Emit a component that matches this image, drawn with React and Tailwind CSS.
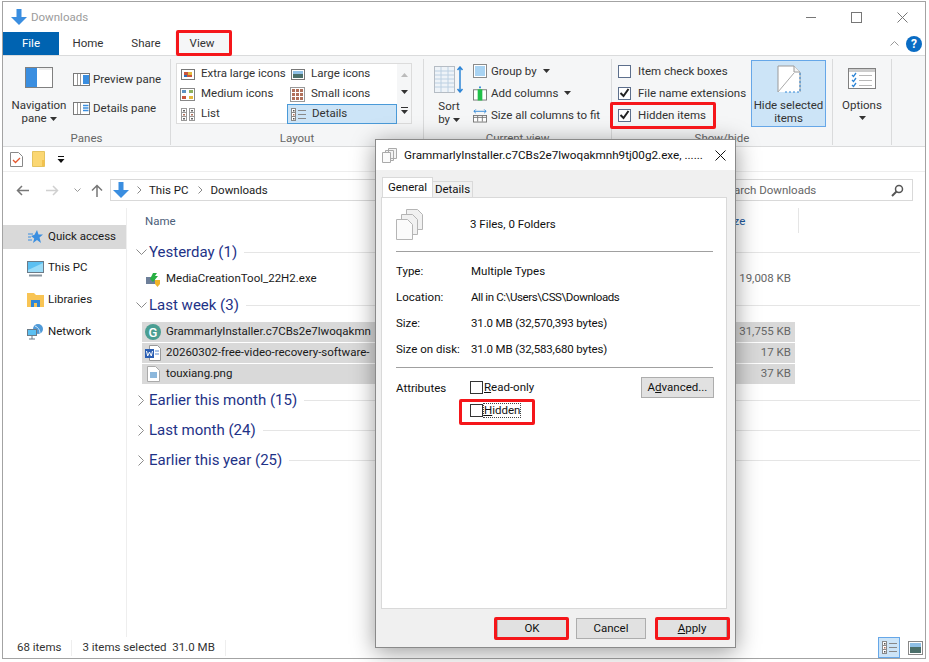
import React from "react";

const Caret = ({ className = "" }) => (
  <svg width="7" height="4" viewBox="0 0 7 4" className={`inline-block ${className}`}><path d="M0 0h7L3.5 4z" fill="#333" /></svg>
);

const DownArrow = ({ s = 16 }) => (
  <svg width={s} height={s} viewBox="0 0 16 16"><path d="M5.5 0h5v8H16l-8 8-8-8h5.500z" fill="#3a8ee0" /></svg>
);

const Check = ({ on }) => (
  <span className="flex h-[13px] w-[13px] shrink-0 items-center justify-center border border-[#5d6f8c] bg-white">
    {on && <svg width="11" height="10" viewBox="0 0 11 10"><path d="M1.500 5l3 3 5-7" fill="none" stroke="#222" strokeWidth="2" /></svg>}
  </span>
);

const GalleryIcon = ({ kind }) => {
  if (kind === "xl") return <svg width="14" height="11" viewBox="0 0 14 11"><rect x=".5" y=".5" width="13" height="10" fill="#fff" stroke="#777" /><rect x="3" y="3" width="8" height="5" fill="#c9553d" /><rect x="7" y="3" width="4" height="3" fill="#e5b93c" /><rect x="3" y="6" width="3" height="2" fill="#2f6fb5" /></svg>;
  if (kind === "l") return <svg width="14" height="11" viewBox="0 0 14 11"><rect x=".5" y=".5" width="13" height="10" fill="#fff" stroke="#777" /><rect x="2" y="2" width="10" height="3" fill="#8fc0e6" /><rect x="2" y="5" width="10" height="4" fill="#4b6f6a" /></svg>;
  if (kind === "m") return <svg width="15" height="13" viewBox="0 0 15 13"><rect x=".5" y=".5" width="14" height="12" fill="#fff" stroke="#888" /><rect x="2" y="2" width="4" height="3" fill="#5d93c4" /><rect x="9" y="2" width="4" height="3" fill="#8cb05a" /><rect x="2" y="8" width="4" height="3" fill="#c9553d" /><rect x="9" y="8" width="4" height="3" fill="#e5b93c" /></svg>;
  if (kind === "s") return <svg width="15" height="15" viewBox="0 0 15 15"><rect x=".5" y=".5" width="14" height="14" fill="#fff" stroke="#999" />{[2, 6, 10].flatMap((x) => [2, 6, 10].map((y) => <rect key={`${x}${y}`} x={x} y={y} width="3" height="3" fill={(x + y) % 4 ? "#8a9a5b" : "#b0705a"} />))}</svg>;
  if (kind === "list") return <svg width="14" height="13" viewBox="0 0 14 13" fill="none" stroke="#999">{[0, 8].map((x) => <g key={x}><rect x={x + .5} y=".5" width="5" height="12" fill="#fff" /><path d={`M${x} 4.500h6M${x} 8.500h6`} /><rect x={x + 2} y="2" width="2" height="1.500" fill="#666" stroke="none" /><rect x={x + 2} y="6" width="2" height="1.500" fill="#b0705a" stroke="none" /><rect x={x + 2} y="10" width="2" height="1.500" fill="#666" stroke="none" /></g>)}</svg>;
  return <DetailsGlyph />;
};

const DetailsGlyph = () => (
  <svg width="15" height="13" viewBox="0 0 15 13" fill="none" stroke="#888"><rect x=".5" y=".5" width="4" height="12" fill="#fff" /><path d="M0 4.500h5M0 8.500h5" /><rect x="2" y="2" width="1.500" height="1.500" fill="#555" stroke="none" /><rect x="2" y="6" width="1.500" height="1.500" fill="#b0705a" stroke="none" /><rect x="2" y="10" width="1.500" height="1.500" fill="#555" stroke="none" /><path d="M7 2.500h8M7 6.500h8M7 10.500h8" /></svg>
);

const PaneIcon = ({ right }) => (
  <svg width="17" height="13" viewBox="0 0 17 13">
    <rect x=".5" y=".5" width="16" height="12" fill="#fff" stroke="#7a7a7a" />
    <path d="M4.500 1v11M7.500 1v11" stroke="#9a9a9a" />
    <rect x="10" y="2" width="6" height="9" fill={right ? "#3a8ee0" : "#fff"} />
    {!right && <path d="M10 3.500h5.500M10 6h5.500M10 8.500h5.500" stroke="#3a8ee0" strokeWidth="1.300" />}
  </svg>
);

const GalleryCell = ({ icon, label, active }) => (
  <div className={`flex h-5 items-center gap-[6px] pl-[3px] ${active ? "border border-[#4a9ad8] bg-[#cce4f7]" : ""}`}>
    <span className="flex w-[15px] justify-center"><GalleryIcon kind={icon} /></span>
    <span className="whitespace-nowrap">{label}</span>
  </div>
);

const GroupLabel = ({ children }) => (
  <div className="flex h-[12px] items-center justify-center text-[#666]">{children}</div>
);

const RibbonGroup = ({ w, label, children }) => (
  <div className={`flex ${w} shrink-0 flex-col border-r border-[#dadbdc]`}>
    <div className="min-h-0 flex-1">{children}</div>
    <GroupLabel>{label}</GroupLabel>
  </div>
);

const CurrentRow = ({ icon, label, caret }) => (
  <div className="flex h-[22px] items-center gap-1">
    <span className="flex w-[14px] justify-center">{icon}</span>
    <span className="whitespace-nowrap pt-px">{label}</span>
    {caret && <Caret className="ml-[2px]" />}
  </div>
);

const ShowRow = ({ on, label }) => (
  <div className="flex h-[22px] items-center gap-[7px] whitespace-nowrap"><Check on={on} /><span className="pt-px">{label}</span></div>
);

const GroupHead = ({ open, label }) => (
  <div className="flex h-[30px] items-center">
    <span className="flex w-[15px] justify-center">
      {open
        ? <svg width="11" height="7" viewBox="0 0 11 7"><path d="M.5.500l5 5 5-5" fill="none" stroke="#8a8a8a" /></svg>
        : <svg width="7" height="11" viewBox="0 0 7 11"><path d="M.5.500l5 5-5 5" fill="none" stroke="#8a8a8a" /></svg>}
    </span>
    <span className="whitespace-nowrap text-[15px] text-[#1e3287]">{label}</span>
    <span className="ml-[7px] h-px flex-1 bg-[#e5e5e5]" />
  </div>
);

const FileRow = ({ icon, name, size, selected }) => (
  <div className={`flex h-5 items-center ${selected ? "bg-[#d9d9d9]" : ""} w-[653px]`}>
    <span className="flex w-[22px] justify-center">{icon}</span>
    <span className="ml-[2px] whitespace-nowrap text-[#1a1a1a]">{name}</span>
    <span className="ml-auto mr-[4px] text-[#666]">{size}</span>
  </div>
);

const NavRow = ({ icon, label, active }) => (
  <div className={`flex h-6 items-center ${active ? "bg-[#d9d9d9]" : ""}`}>
    <span className="ml-[22px] flex w-[21px] justify-center">{icon}</span>
    <span className="ml-[2px] whitespace-nowrap text-[#1a1a1a]">{label}</span>
  </div>
);

const Monitor = ({ s = 17 }) => (
  <svg width={s} height={s} viewBox="0 0 17 17"><rect x=".5" y="1.500" width="16" height="11" fill="#5cc0f2" stroke="#6b7b88" /><path d="M1 10l15-7v9H1z" fill="#9adcf8" /><rect x="2" y="14.500" width="13" height="2" fill="#8a96a0" /></svg>
);

const Red = ({ className }) => (
  <div className={`pointer-events-none absolute rounded-[2px] border-[3px] border-[#f5161a] ${className}`} />
);

const Prop = ({ k, v, tight = "" }) => (
  <div className="flex h-[26px] items-center">
    <span className="w-[75px] whitespace-nowrap">{k}</span>
    <span className={`whitespace-nowrap ${tight}`}>{v}</span>
  </div>
);

const DlgButton = ({ w, className = "", children }) => (
  <button className={`flex h-[21px] ${w} items-center justify-center border border-[#adadad] bg-[#e1e1e1] pt-px text-[#111] ${className}`}>{children}</button>
);

const Pages = ({ w = 27, h = 32 }) => (
  <svg width={w} height={h} viewBox="0 0 27 32">
    {[10, 5, 0].map((o) => (
      <path key={o} d={`M${o + .5} ${10.500 - o}h11l5 5v15h-16z`} fill={o === 0 ? "#fbfbfb" : "#f1f1f1"} stroke="#b5b5b5" />
    ))}
  </svg>
);

export default function App() {
  return (
    <div className="relative h-[662px] w-[929px] overflow-hidden bg-white pb-[3px] pl-[2px] pr-[3px] pt-px font-['Roboto',sans-serif] text-[11.500px] leading-none text-[#333]">
      <div className="flex h-full flex-col border border-[#a3a3a3] bg-white">
        {/* Title bar */}
        <div className="flex h-[30px] shrink-0 items-center pl-[8px]">
          <DownArrow s={16} />
          <span className="ml-[4px] pt-px text-[#9b9b9b]">Downloads</span>
          <div className="ml-auto flex items-center gap-[35px] pr-[17px]">
            <span className="h-px w-[10px] bg-[#777]" />
            <span className="h-[11px] w-[11px] border border-[#777]" />
            <svg width="11" height="11" viewBox="0 0 11 11"><path d="M.5.500l10 10M10.500.500l-10 10" stroke="#777" fill="none" /></svg>
          </div>
        </div>
        {/* Tabs */}
        <div className="relative flex h-[24px] shrink-0 items-stretch border-b border-[#dadbdc]">
          <div className="flex w-[56px] items-center justify-center bg-[#0063b1] pt-px text-white">File</div>
          <div className="flex w-[58px] items-center justify-center pt-px">Home</div>
          <div className="flex w-[58px] items-center justify-center pt-px">Share</div>
          <div className="flex w-[54px] items-center justify-center bg-[#f5f6f7] pt-px">View</div>
          <div className="ml-auto flex items-center gap-[7px] pr-[3px]">
            <svg width="9" height="5" viewBox="0 0 9 5"><path d="M.5 4.500l4-4 4 4" fill="none" stroke="#999" /></svg>
            <span className="flex h-4 w-4 items-center justify-center rounded-full bg-[#0a6cc4] text-[12px] font-bold text-white">?</span>
          </div>
        </div>
        {/* Ribbon */}
        <div className="flex h-[91px] shrink-0 border-b border-[#dadbdc] bg-[#f5f6f7] pb-[1px] pt-[3px]">
          <RibbonGroup w="w-[168px]" label="Panes">
            <div className="flex h-full">
              <div className="flex w-[70px] flex-col items-center pl-[2px]">
                <svg className="mt-[8px]" width="28" height="21" viewBox="0 0 28 21"><rect x=".5" y=".5" width="27" height="20" fill="#fff" stroke="#808080" /><rect x="1" y="1" width="11" height="19" fill="#3a8ee0" /><path d="M14 2h13" stroke="#ddd" /></svg>
                <div className="mt-[11px] leading-[13px]">Navigation</div>
                <div className="leading-[13px]">pane <Caret /></div>
              </div>
              <div className="flex flex-col pt-[6px]">
                <div className="flex h-[29px] items-center gap-[3px] whitespace-nowrap"><PaneIcon right />Preview pane</div>
                <div className="flex h-[29px] items-center gap-[3px] whitespace-nowrap"><PaneIcon />Details pane</div>
              </div>
            </div>
          </RibbonGroup>
          <RibbonGroup w="w-[253px]" label="Layout">
            <div className="ml-[5px] mt-[4px] flex h-[61px] w-[236px] border border-[#dcdcdc] bg-white">
              <div className="grid flex-1 grid-cols-[110px_110px] grid-rows-[20px_20px_20px]">
                <GalleryCell icon="xl" label="Extra large icons" />
                <GalleryCell icon="l" label="Large icons" />
                <GalleryCell icon="m" label="Medium icons" />
                <GalleryCell icon="s" label="Small icons" />
                <GalleryCell icon="list" label="List" />
                <GalleryCell icon="details" label="Details" active />
              </div>
              <div className="flex w-[14px] flex-col items-center justify-around bg-[#f5f6f7] py-[2px]">
                <svg width="7" height="4" viewBox="0 0 7 4"><path d="M0 4h7L3.500 0z" fill="#bbb" /></svg>
                <Caret />
                <svg width="7" height="7" viewBox="0 0 7 7"><path d="M0 0h7v1H0zM0 3h7L3.500 7z" fill="#333" /></svg>
              </div>
            </div>
          </RibbonGroup>
          <RibbonGroup w="w-[188px]" label="Current view">
            <div className="flex h-full">
              <div className="flex w-[49px] flex-col items-center pl-[1px]">
                <svg className="mt-[7px]" width="30" height="27" viewBox="0 0 30 27"><rect x=".5" y=".5" width="20" height="26" fill="#eef3f8" stroke="#b5bcc4" /><path d="M1 5h19M1 9h19M1 13h19M1 17h19M1 21h19M7 1v25M14 1v25" stroke="#bcd0e2" /><path d="M26 1v25M23.500 4L26 1l2.500 3M23.500 23L26 26l2.500-3" fill="none" stroke="#2f86d6" strokeWidth="1.500" /></svg>
                <div className="mt-[7px] leading-[13px]">Sort</div>
                <div className="leading-[13px]">by <Caret /></div>
              </div>
              <div className="pt-[1px]">
                <CurrentRow label="Group by" caret icon={<svg width="14" height="14" viewBox="0 0 14 14"><rect x=".5" y=".5" width="13" height="13" fill="#fff" stroke="#8a8a8a" /><rect x="2" y="2" width="10" height="10" fill="#a9d3f2" /></svg>} />
                <CurrentRow label="Add columns" caret icon={<svg width="15" height="15" viewBox="0 0 15 15"><rect x=".5" y="3.500" width="14" height="11" fill="#fff" stroke="#777" /><rect x="5" y="3" width="5" height="12" fill="#22c04a" /><path d="M7.500 0v2" stroke="#2f86d6" strokeWidth="2" /></svg>} />
                <CurrentRow label="Size all columns to fit" icon={<svg width="15" height="15" viewBox="0 0 15 15"><path d="M1 3h13M3 1L1 3l2 2M12 1l2 2-2 2" fill="none" stroke="#2f86d6" /><rect x=".5" y="7.500" width="14" height="7" fill="#fff" stroke="#777" /><path d="M0.500 9.500h14M5 8v6M10 8v6" stroke="#777" /></svg>} />
              </div>
            </div>
          </RibbonGroup>
          <RibbonGroup w="w-[221px]" label="Show/hide">
            <div className="flex h-full">
              <div className="w-[139px] pl-[6px] pt-[1px]">
                <ShowRow label="Item check boxes" />
                <ShowRow on label="File name extensions" />
                <ShowRow on label="Hidden items" />
              </div>
              <div className="mt-px flex h-[67px] w-[75px] shrink-0 flex-col items-center border border-[#66a7e8] bg-[#cce4f7] pt-[4px]">
                <svg width="24" height="28" viewBox="0 0 24 28"><path d="M1 27V1h16l6 6v20" fill="#fff" stroke="#9a9a9a" /><path d="M1 27L17 8" stroke="#aaa" /><path d="M23 8v19H8" fill="none" stroke="#2f86d6" strokeDasharray="2 2" /><path d="M17 1v6h6" fill="#f5f5f5" stroke="#9a9a9a" /></svg>
                <div className="mt-[6px] leading-[13px] whitespace-nowrap">Hide selected</div>
                <div className="leading-[13px]">items</div>
              </div>
            </div>
          </RibbonGroup>
          <RibbonGroup w="w-[59px]" label="">
            <div className="flex flex-col items-center">
              <svg className="mt-[9px]" width="28" height="21" viewBox="0 0 28 21"><rect x=".5" y=".5" width="27" height="20" fill="#fff" stroke="#808080" /><path d="M1 2.500h26" stroke="#ccc" strokeWidth="3" /><path d="M4 7l1.500 1.500L8 5M4 12l1.500 1.500L8 10M4 17l1.500 1.500L8 15" fill="none" stroke="#2f86d6" strokeWidth="1.300" /><path d="M11 7.500h13M11 12.500h13M11 17.500h13" stroke="#b8b8b8" /></svg>
              <div className="mt-[10px] leading-[13px]">Options</div>
              <Caret className="mt-[4px]" />
            </div>
          </RibbonGroup>
        </div>
        {/* Quick access toolbar */}
        <div className="flex h-[25px] shrink-0 items-center border-b border-[#eeeeee] pl-[7px]">
          <svg width="13" height="15" viewBox="0 0 13 15"><path d="M.5.500h8l4 4v10H.5z" fill="#fff" stroke="#888" /><path d="M3 8l2.500 2.500L10 6" fill="none" stroke="#e4572e" strokeWidth="1.300" /></svg>
          <svg className="ml-[9px]" width="13" height="16" viewBox="0 0 13 16"><path d="M.5.500h12v15H.5z" fill="#fbd772" stroke="#e4c35f" /><path d="M10 9v6h2.500V9z" fill="#f2c14e" /></svg>
          <svg className="ml-[12px]" width="8" height="7" viewBox="0 0 8 7"><path d="M1 0h6v1H1zM.5 3h7L4 7z" fill="#111" /></svg>
        </div>
        {/* Address row */}
        <div className="flex h-9 shrink-0 items-center pl-[13px] pr-[12px]">
          <svg width="13" height="11" viewBox="0 0 13 11"><path d="M13 5.500H2M6 1L1.500 5.500 6 10" fill="none" stroke="#777" strokeWidth="1.500" /></svg>
          <svg className="ml-[17px]" width="13" height="11" viewBox="0 0 13 11"><path d="M0 5.500h11M7 1l4.500 4.500L7 10" fill="none" stroke="#d0d0d0" strokeWidth="1.500" /></svg>
          <svg className="ml-[15px]" width="7" height="4" viewBox="0 0 7 4"><path d="M.5.500l3 3 3-3" fill="none" stroke="#999" /></svg>
          <svg className="ml-[10px]" width="12" height="13" viewBox="0 0 12 13"><path d="M6 13V2M1 6.500L6 1.500l5 5" fill="none" stroke="#777" strokeWidth="1.500" /></svg>
          <div className="ml-[7px] flex h-[22px] flex-1 items-center border border-[#d9d9d9] pl-[2px]">
            <DownArrow s={16} />
            <svg className="ml-[8px]" width="5" height="8" viewBox="0 0 5 8"><path d="M.5.500l3.500 3.500L.5 7.500" fill="none" stroke="#888" /></svg>
            <span className="ml-[7px] pt-px text-[#1a1a1a]">This PC</span>
            <svg className="ml-[9px]" width="5" height="8" viewBox="0 0 5 8"><path d="M.5.500l3.500 3.500L.5 7.500" fill="none" stroke="#888" /></svg>
            <span className="ml-[8px] pt-px text-[#1a1a1a]">Downloads</span>
          </div>
          <div className="ml-[5px] flex h-[22px] w-[197px] items-center justify-between border border-[#d9d9d9] pl-[4px] pr-[8px] text-[#666]">
            <span className="pt-px">Search Downloads</span>
            <svg width="13" height="13" viewBox="0 0 13 13"><circle cx="8" cy="5" r="3.500" fill="none" stroke="#555" strokeWidth="1.500" /><path d="M5.500 7.500L1 12" stroke="#555" strokeWidth="2" /></svg>
          </div>
        </div>
        {/* Main area */}
        <div className="flex min-h-0 flex-1">
          <div className="w-[124px] shrink-0 border-r border-[#eeeeee] pt-[17px]">
            <NavRow active label="Quick access" icon={<svg width="15" height="14" viewBox="0 0 15 14"><path d="M9 0l1.500 4.500H15l-3.500 3 1.500 5.500-4-3-4 3 1.200-4.500L3 6l3.500-1.200z" fill="#3a8ee0" /><path d="M0 4h5M0 7h3M0 10h4" stroke="#3a8ee0" /></svg>} />
            <div className="mt-[7px] flex flex-col gap-[8px]">
              <NavRow label="This PC" icon={<Monitor />} />
              <NavRow label="Libraries" icon={<svg width="17" height="14" viewBox="0 0 17 14"><path d="M0 0h7l2 2h8v12H0z" fill="#f8c454" /><rect x="4" y="7" width="9" height="7" fill="#2f86d6" /><rect x="7" y="10" width="3" height="4" fill="#f8c454" /></svg>} />
              <NavRow label="Network" icon={<svg width="17" height="16" viewBox="0 0 17 16"><circle cx="11" cy="5" r="5" fill="#4f9ad8" /><path d="M8 2c3 1 5 4 5 7" stroke="#cfe6f7" fill="none" /><rect x=".5" y="5.500" width="9" height="6" fill="#5cc0f2" stroke="#6b7b88" /><path d="M5 12v3M2 15h6" stroke="#6b7b88" /></svg>} />
            </div>
          </div>
          <div className="min-w-0 flex-1 pl-[7px] pr-[5px]">
            <div className="relative mb-[3px] flex h-[26px] items-center pl-[11px] pt-px text-[#4c607a]">
              <span>Name</span>
              <span className="absolute left-[590px] text-[#1e5a9e]">Size</span>
              <span className="absolute left-[664px] top-0 h-[25px] w-px bg-[#e5e5e5]" />
            </div>
            <GroupHead open label="Yesterday (1)" />
            <div className="mb-[1px] mt-[2px] pl-[8px]"><FileRow name="MediaCreationTool_22H2.exe" size="19,008 KB" icon={<svg width="16" height="16" viewBox="0 0 16 16"><rect x="1" y="6" width="9" height="7" fill="#6d7f99" /><path d="M5 8l3-6h4l-2 3h3l-5 6z" fill="#27b043" /><path d="M10 9h5v4l-2.500 3L10 13z" fill="#f0b429" /></svg>} /></div>
            <GroupHead open label="Last week (3)" />
            <div className="flex flex-col gap-px pl-[8px] pt-[2px]">
              <FileRow selected name="GrammarlyInstaller.c7CBs2e7lwoqakmn" size="31,755 KB" icon={<span className="flex h-4 w-4 items-center justify-center rounded-full bg-[#4a9e92] text-[13px] font-medium text-white">G</span>} />
              <FileRow selected name="20260302-free-video-recovery-software-" size="17 KB" icon={<svg width="16" height="16" viewBox="0 0 16 16"><path d="M4.500.500h8l3 3v12h-11z" fill="#fff" stroke="#999" /><rect x="0" y="4" width="9" height="9" fill="#2b5fb4" /><path d="M1.500 6l1.200 5 1.800-4 1.800 4L7.500 6" fill="none" stroke="#fff" /><path d="M10 6h4M10 9h4" stroke="#5a8bd0" /></svg>} />
              <FileRow selected name="touxiang.png" size="37 KB" icon={<svg width="13" height="16" viewBox="0 0 13 16"><path d="M.5.500h8l4 4v11H.5z" fill="#fff" stroke="#aaa" /><rect x="3" y="6" width="7" height="6" fill="#8db8dc" /></svg>} />
            </div>
            <div className="mt-[1px] flex flex-col">
              <GroupHead label="Earlier this month (15)" />
              <GroupHead label="Last month (24)" />
              <GroupHead label="Earlier this year (25)" />
            </div>
          </div>
        </div>
        {/* Status bar */}
        <div className="flex h-[21px] shrink-0 items-center pl-[14px] text-[#333]">
          <span className="pt-px">68 items</span>
          <span className="ml-[10px] h-4 w-px bg-[#eeeeee]" />
          <span className="ml-[10px] pt-px">3 items selected&nbsp; 31.0 MB</span>
          <span className="ml-[10px] h-4 w-px bg-[#eeeeee]" />
          <div className="ml-auto flex items-center gap-[8px] pr-[2px]">
            <span className="flex h-[21px] w-[22px] items-center justify-center border border-[#66a7e8] bg-[#cce4f7]"><DetailsGlyph /></span>
            <svg width="15" height="14" viewBox="0 0 15 14"><rect x=".5" y=".5" width="14" height="13" fill="#fff" stroke="#888" /><rect x="2" y="2" width="11" height="4" fill="#8fc0e6" /><rect x="2" y="6" width="11" height="6" fill="#4b6f6a" /></svg>
          </div>
        </div>
      </div>

      {/* Properties dialog */}
      <div className="absolute left-[375px] top-[139px] flex h-[509px] w-[361px] flex-col border border-[#8a8a8a] bg-[#f0f0f0] shadow-[0_4px_22px_rgba(0,0,0,0.4)]">
        <div className="flex h-[30px] shrink-0 items-center bg-white pl-[6px] pr-[9px] text-[11.700px] text-[#111]">
          <span className="mr-[7px] flex"><svg width="15" height="15" viewBox="0 0 15 15"><path d="M6.500.500h8v10h-8zM3.500 2.500h8v10h-8z" fill="#f4f4f4" stroke="#aaa" /><path d="M.5 4.500h8v10h-8z" fill="#fbfbfb" stroke="#aaa" /></svg></span>
          <span className="whitespace-nowrap pt-px">GrammarlyInstaller.c7CBs2e7lwoqakmnh9tj00g2.exe, ......</span>
          <svg className="ml-auto" width="11" height="11" viewBox="0 0 11 11"><path d="M.5.500l10 10M10.500.500l-10 10" stroke="#111" fill="none" /></svg>
        </div>
        <div className="flex min-h-0 flex-1 flex-col pl-[5px] pr-[8px]">
          <div className="relative z-10 mt-[7px] flex h-[20px] shrink-0 items-end pl-px text-[#111]">
            <div className="flex h-[20px] w-[51px] items-center justify-center border border-b-0 border-[#d9d9d9] bg-white">General</div>
            <div className="flex h-[16px] w-[40px] items-center justify-center border border-l-0 border-b-0 border-[#d9d9d9] bg-[#f0f0f0]">Details</div>
          </div>
          <div className="min-h-0 flex-1 border border-[#d9d9d9] bg-white pl-[14px] pr-[13px] text-[#111]">
            <div className="flex h-[54px] items-center border-b border-[#a0a0a0] pt-px">
              <Pages />
              <span className="ml-[47px] -mt-px">3 Files, 0 Folders</span>
            </div>
            <div className="border-b border-[#a0a0a0] pb-[4px] pt-[7px]">
              <Prop k="Type:" v="Multiple Types" />
              <Prop k="Location:" v="All in C:\Users\CSS\Downloads" tight="tracking-[-0.4px]" />
              <Prop k="Size:" v="31.0 MB (32,570,393 bytes)" tight="tracking-[-0.15px]" />
              <Prop k="Size on disk:" v="31.0 MB (32,583,680 bytes)" tight="tracking-[-0.15px]" />
            </div>
            <div className="flex pt-[11px]">
              <span className="w-[74px] pt-[4px]">Attributes</span>
              <div className="flex flex-col gap-[10px] pt-[2px]">
                <label className="flex items-center gap-[1px]"><span className="h-[13px] w-[13px] border border-[#333]" /><span className="pt-px"><u>R</u>ead-only</span></label>
                <label className="flex items-center gap-[1px]"><span className="h-[13px] w-[13px] border border-[#333]" /><span className="pt-px outline-1 outline-dotted outline-[#444]"><u>H</u>idden</span></label>
              </div>
              <DlgButton w="w-[73px] ml-auto -mr-px -mt-[2px]">A<u>d</u>vanced...</DlgButton>
            </div>
          </div>
          <div className="-mr-[8px] flex h-[38px] shrink-0 items-center justify-end gap-[9px] pr-[8px]">
            <DlgButton w="w-[70px]">OK</DlgButton>
            <DlgButton w="w-[70px]">Cancel</DlgButton>
            <DlgButton w="w-[70px] ml-[2px]"><u>A</u>pply</DlgButton>
          </div>
        </div>
      </div>

      {/* Red annotation boxes */}
      <Red className="left-[176px] top-[30px] h-[26px] w-[56px]" />
      <Red className="left-[610px] top-[102px] h-[27px] w-[106px]" />
      <Red className="left-[459px] top-[399px] h-[26px] w-[76px]" />
      <Red className="left-[494px] top-[617px] h-[23px] w-[75px]" />
      <Red className="left-[655px] top-[617px] h-[23px] w-[75px]" />
    </div>
  );
}
